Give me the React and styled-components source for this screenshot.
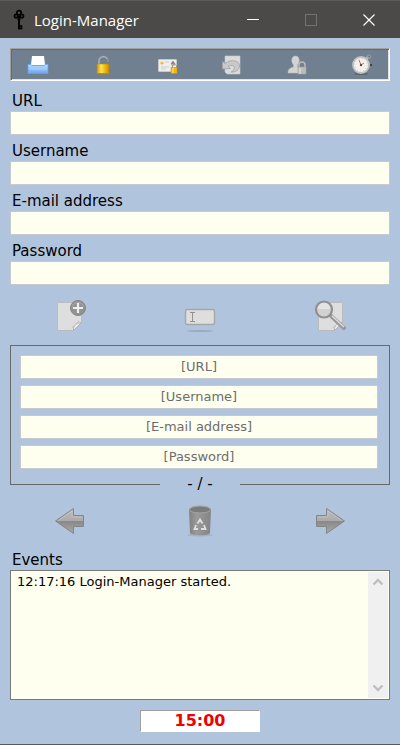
import React, { useId } from "react";
import styled, { createGlobalStyle, css } from "styled-components";

const GlobalStyle = createGlobalStyle`
  * { box-sizing: border-box; }
  html, body, #root { height: 100%; }
  body {
    margin: 0;
    background: #b0c4de;
    color: #000;
    font-family: Verdana, "DejaVu Sans", sans-serif;
  }
  button, input, textarea { font-family: inherit; border-radius: 0; }
`;

const Window = styled.div`
  min-height: 100vh;
  display: flex;
  flex-direction: column;
  background: #b0c4de;
  border-bottom: 1px solid #5a5a5a;
`;

const TitleBar = styled.header`
  height: 38px;
  display: flex;
  align-items: center;
  padding: 0 2px 0 10px;
  background: #4c4a48;
  border-top: 1px solid #5b5a58;
  color: #fff;
`;

const Title = styled.h1`
  flex: 1;
  margin: 0 0 0 6px;
  font: 400 15px/20px "Segoe UI", "Open Sans", sans-serif;
`;

const plainButton = css`
  display: flex;
  align-items: center;
  justify-content: center;
  padding: 0;
  border: 0;
  background: transparent;
`;

const WindowButton = styled.button`
  ${plainButton}
  width: 58px;
  height: 36px;
  color: ${(p) => (p.disabled ? "#737270" : "#fff")};
`;

const Content = styled.main`
  flex: 1;
  display: flex;
  flex-direction: column;
  padding: 10px 10px 12px;
`;

const Toolbar = styled.div`
  height: 33px;
  display: flex;
  justify-content: space-between;
  align-items: center;
  padding: 0 16px;
  background: #708090;
  border: 1px solid #a0a0a0;
  border-right-color: #fff;
  border-bottom-color: #fff;
  box-shadow: inset 1px 1px #696969, inset -1px -1px #e3e3e3;
`;

const ToolButton = styled.button`
  ${plainButton}
  width: 22px;
  height: 24px;
`;

const Form = styled.form`
  display: flex;
  flex-direction: column;
  gap: 6px;
  margin-top: 10px;
`;

const Label = styled.label`
  display: block;
  padding-left: 2px;
  font-size: 15px;
  line-height: 20px;
`;

const TextBox = styled.input`
  display: block;
  width: 100%;
  height: 24px;
  padding: 0 5px 2px;
  border: 1px solid #c8c8d0;
  background: #fffff0;
  color: #000;
  font-size: 13px;
  outline: none;
  text-align: ${(p) => (p.$centered ? "center" : "left")};
  &::placeholder { color: #6d6d6d; opacity: 1; }
`;

const ActionRow = styled.div`
  height: ${(p) => (p.$short ? "30px" : "32px")};
  display: grid;
  grid-template-columns: 120px 1fr 120px;
  align-items: center;
  justify-items: center;
  margin-top: ${(p) => (p.$short ? "20px" : "15px")};
`;

const ActionButton = styled.button`
  ${plainButton}
  width: 32px;
  height: 32px;
`;

const Record = styled.section`
  position: relative;
  display: flex;
  flex-direction: column;
  gap: 6px;
  margin-top: 13px;
  padding: 9px 11px 15px 9px;
  border: 1px solid #696969;
`;

const Counter = styled.output`
  position: absolute;
  bottom: -10px;
  left: 50%;
  width: 80px;
  margin-left: -40px;
  background: #b0c4de;
  font-size: 15px;
  line-height: 20px;
  text-align: center;
`;

const EventSection = styled.section`
  flex: 1;
  display: flex;
  flex-direction: column;
  margin-top: 15px;
`;

const EventFrame = styled.div`
  flex: 1;
  display: flex;
  min-height: 130px;
  padding: 1px;
  border: 1px solid #7a7a7a;
  background: #fffff0;
`;

const EventLog = styled.textarea`
  flex: 1;
  min-width: 0;
  padding: 1px 5px;
  border: 0;
  background: transparent;
  color: #000;
  font-size: 13px;
  line-height: 18px;
  resize: none;
  outline: none;
`;

const ScrollTrack = styled.div`
  width: 20px;
  display: flex;
  flex-direction: column;
  justify-content: space-between;
  background: #f0f0f0;
`;

const ScrollButton = styled.button`
  ${plainButton}
  height: 20px;
  color: #bfbfbf;
`;

const Timer = styled.time`
  align-self: center;
  width: 120px;
  height: 22px;
  margin-top: 10px;
  border: 1px solid #fff;
  border-top-color: #a0a0a0;
  border-left-color: #a0a0a0;
  background: #fff;
  color: #f00000;
  font-size: 16px;
  font-weight: 700;
  line-height: 20px;
  text-align: center;
`;

const KeyIcon = () => (
  <svg width="18" height="22" viewBox="0 0 18 22" fill="none" stroke="#000">
    <g strokeWidth="1.7">
      <circle cx="9" cy="3.800" r="2.200" />
      <circle cx="6.200" cy="7" r="1.700" />
      <circle cx="11.800" cy="7" r="1.700" />
    </g>
    <path d="M9 7v13.500" strokeWidth="2" />
    <path d="M9 10h0M7.500 10.500h3M10 17h1.500v2.500H10" strokeWidth="1.600" />
  </svg>
);

const InboxIcon = () => (
  <svg width="22" height="20" viewBox="0 0 22 20">
    <defs>
      <linearGradient id="tray" x2="0" y2="1">
        <stop stopColor="#b9dcff" /><stop offset="1" stopColor="#6ba5ed" />
      </linearGradient>
    </defs>
    <path d="M3 6h16l1 5H2z" fill="#5289cf" />
    <path d="M5 1h12l1 9H4z" fill="#fff" />
    <path d="M1 9.500h3l1 1h12l1-1h3v9H1z" fill="url(#tray)" stroke="#6da5ea" strokeWidth=".7" />
    <path d="M2 14h18" stroke="#a9d1ff" />
  </svg>
);

const UnlockIcon = () => (
  <svg width="16" height="22" viewBox="0 0 16 22">
    <defs>
      <linearGradient id="gold">
        <stop stopColor="#d69a06" /><stop offset=".35" stopColor="#ffe450" />
        <stop offset=".65" stopColor="#edbb12" /><stop offset="1" stopColor="#c98e00" />
      </linearGradient>
    </defs>
    <path d="M4 11V7c0-6 9-6 9-.5V8" fill="none" stroke="#858f95" strokeWidth="2" />
    <path d="M4 11V7c0-5 7-5.5 8-2" fill="none" stroke="#c5cbd0" strokeWidth=".8" />
    <rect x="2" y="10" width="12" height="10" rx=".8" fill="url(#gold)" stroke="#b88800" strokeWidth=".5" />
    <path d="M2 19.5h12" stroke="#c58b00" />
  </svg>
);

const CardIcon = () => (
  <svg width="22" height="20" viewBox="0 0 22 20">
    <rect x="1.5" y="4.5" width="18" height="12" rx=".6" fill="#eee" stroke="#c5c9cb" />
    <circle cx="5" cy="8" r="1.6" fill="#e8bd2d" />
    <path d="M8 7h4M4 12h8M4 14h5" stroke="#c9ccd0" />
    <path d="M14 9l2-3 2 3zM14 10h4" fill="#b98078" stroke="#777" strokeWidth=".6" />
    <path d="M15.5 13v-2c0-2 4-2 4 0v2" fill="none" stroke="#9b9b8e" />
    <rect x="14" y="12.5" width="6" height="6" fill="#edb719" stroke="#c5910c" strokeWidth=".5" />
    <path d="M16 13v5" stroke="#ffe575" />
  </svg>
);

const UndoIcon = () => (
  <svg width="22" height="20" viewBox="0 0 22 20">
    <path d="M4 1h15v18H6l-2-2z" fill="#dcdcdc" stroke="#cacaca" strokeWidth=".6" />
    <path d="M1.500 6.500v7.500l8-.500-2.500-2.200c4-2 7.500-.5 6 3-.5 1.200-1.500 2-3 2.700 5 .5 8.500-2.500 8.500-6 0-5.500-8-7.500-14.500-2.500z" fill="#c9c9c9" stroke="#a2a2a2" strokeWidth=".8" />
  </svg>
);

const UserLockIcon = () => (
  <svg width="20" height="22" viewBox="0 0 20 22">
    <path d="M1 19c0-4 2-5 5.5-6v-2C3.5 7 4.5 2 8.5 2s5 5 2 9v2c3 1 5 2 5 6z" fill="#d3d3d3" stroke="#bbb" strokeWidth=".5" />
    <path d="M12 14v-3c0-4 6-4 6 0v3" fill="none" stroke="#b9b9b9" strokeWidth="1.5" />
    <rect x="11" y="13" width="8" height="7" fill="#bcbcbc" stroke="#a4a4a4" strokeWidth=".6" />
    <path d="M13 14v5.500" stroke="#dcdcdc" strokeWidth="1.5" />
  </svg>
);

const StopwatchIcon = () => (
  <svg width="22" height="22" viewBox="0 0 22 22">
    <ellipse cx="10" cy="20" rx="7" ry="1" fill="#566574" />
    <path d="M15 5l2-2" stroke="#c7cccf" strokeWidth="2" />
    <circle cx="18" cy="2.700" r="1.800" fill="none" stroke="#93a2ab" />
    <circle cx="10" cy="11" r="8" fill="#f4f2f0" stroke="#c4c1be" strokeWidth="1.8" />
    <circle cx="10" cy="11" r="6" fill="none" stroke="#c2bfba" strokeDasharray=".7 2.440" />
    <path d="M10 11L8 6M10 11l3-2" stroke="#b5706d" />
    <circle cx="10" cy="11" r="1.200" fill="#75403e" />
    <path d="M20 10v2" stroke="#222" strokeWidth="1.300" />
  </svg>
);

const Sheet = () => (
  <>
    <path d="M3.500 2.500h24v20l-8 8h-16z" fill="#dedede" stroke="#b9bbbe" />
    <path d="M19.500 30.500c0-5 1-7 8-8z" fill="#ededed" stroke="#b2b2b2" />
    <path d="M18 28l7-7" stroke="#c8c8c8" strokeWidth="1.500" />
  </>
);

const AddIcon = () => (
  <svg width="32" height="32" viewBox="0 0 32 32">
    <Sheet />
    <circle cx="24" cy="8" r="7.500" fill="#929292" stroke="#858585" />
    <path d="M18 7c2-6 10-6 12 0" fill="none" stroke="#aaa" />
    <path d="M19 8h10M24 3v10" stroke="#eee" strokeWidth="2.200" />
  </svg>
);

const RenameIcon = () => (
  <svg width="32" height="32" viewBox="0 0 32 32">
    <rect x="1.500" y="9.500" width="29" height="15" rx="2" fill="#dedede" stroke="#a6a6a6" strokeWidth="1.400" />
    <path d="M6 12.500h5M6 21.500h5M8.500 12v10" stroke="#929292" />
    <ellipse cx="16" cy="31" rx="13" ry="1" fill="#98abc2" />
  </svg>
);

const SearchIcon = () => (
  <svg width="32" height="32" viewBox="0 0 32 32">
    <g transform="translate(1 0)"><Sheet /></g>
    <path d="M17 16l13 12" stroke="#989898" strokeWidth="4" strokeLinecap="round" />
    <path d="M18 16l12 11" stroke="#ddd" strokeWidth="1.500" />
    <circle cx="10" cy="9.500" r="8" fill="#d2d2d2" stroke="#909090" strokeWidth="2.200" />
    <path d="M4 9c0-8 12-8 12 0z" fill="#e4e4e4" />
  </svg>
);

const ArrowShape = () => (
  <>
    <defs>
      <linearGradient id="steel" x2="0" y2="1">
        <stop stopColor="#bebebe" /><stop offset=".5" stopColor="#aaa" />
        <stop offset=".52" stopColor="#898989" /><stop offset="1" stopColor="#aaa" />
      </linearGradient>
    </defs>
    <path d="M1.500 16L19.500 3.500v7h10v11h-10v7z" fill="url(#steel)" stroke="#858585" strokeLinejoin="round" />
    <path d="M4 16L18 6v6h10" fill="none" stroke="#c6c6c6" strokeWidth=".7" />
  </>
);

const ArrowIcon = ({ right }) => (
  <svg width="32" height="32" viewBox="0 0 32 32">
    {right ? <g transform="matrix(-1 0 0 1 32 0)"><ArrowShape /></g> : <ArrowShape />}
  </svg>
);

const TrashIcon = () => (
  <svg width="32" height="32" viewBox="0 0 32 32">
    <defs>
      <linearGradient id="bin">
        <stop stopColor="#808080" /><stop offset=".35" stopColor="#9a9a9a" /><stop offset="1" stopColor="#848484" />
      </linearGradient>
    </defs>
    <ellipse cx="16" cy="30" rx="13" ry="1.500" fill="#a1b4cc" />
    <path d="M5 4l1 24c1 3 19 3 20 0l1-24z" fill="url(#bin)" />
    <ellipse cx="16" cy="4.500" rx="10.500" ry="3.500" fill="#7b7b7b" stroke="#a6a6a6" />
    <path d="M13.500 18.500l2.500-4 2.500 4M20 20l1.500 4H17M14 24h-3.500L12 20" fill="none" stroke="#dedede" strokeWidth="1.800" />
  </svg>
);

const Chevron = ({ down }) => (
  <svg width="12" height="8" viewBox="0 0 12 8" fill="none" stroke="currentColor" strokeWidth="2.400">
    <path d={down ? "M1.500 1.500L6 6l4.500-4.500" : "M1.500 6.500L6 2l4.500 4.500"} />
  </svg>
);

const MinimizeIcon = () => (
  <svg width="12" height="12"><path d="M0 5.500h12" stroke="currentColor" /></svg>
);
const MaximizeIcon = () => (
  <svg width="12" height="12"><rect x=".5" y=".5" width="11" height="11" fill="none" stroke="currentColor" /></svg>
);
const CloseIcon = () => (
  <svg width="12" height="12"><path d="M.5 .5l11 11M11.500 .5l-11 11" stroke="currentColor" strokeWidth="1.200" /></svg>
);

const tools = [
  ["Open", InboxIcon],
  ["Unlock", UnlockIcon],
  ["Change certificate", CardIcon],
  ["Undo", UndoIcon],
  ["Lock user", UserLockIcon],
  ["Timer", StopwatchIcon],
];

const fields = ["URL", "Username", "E-mail address", "Password"];

function Field({ label }) {
  const id = useId();
  return (
    <div>
      <Label htmlFor={id}>{label}</Label>
      <TextBox id={id} type={label === "Password" ? "password" : "text"} />
    </div>
  );
}

export default function App() {
  return (
    <>
      <GlobalStyle />
      <Window>
        <TitleBar>
          <KeyIcon />
          <Title>Login-Manager</Title>
          <WindowButton aria-label="Minimize"><MinimizeIcon /></WindowButton>
          <WindowButton aria-label="Maximize" disabled><MaximizeIcon /></WindowButton>
          <WindowButton aria-label="Close"><CloseIcon /></WindowButton>
        </TitleBar>
        <Content>
          <Toolbar role="toolbar">
            {tools.map(([name, Icon]) => (
              <ToolButton key={name} aria-label={name}><Icon /></ToolButton>
            ))}
          </Toolbar>
          <Form>
            {fields.map((label) => <Field key={label} label={label} />)}
          </Form>
          <ActionRow>
            <ActionButton aria-label="Add"><AddIcon /></ActionButton>
            <ActionButton aria-label="Rename"><RenameIcon /></ActionButton>
            <ActionButton aria-label="Search"><SearchIcon /></ActionButton>
          </ActionRow>
          <Record>
            {fields.map((label) => (
              <TextBox key={label} $centered readOnly aria-label={label} placeholder={`[${label}]`} />
            ))}
            <Counter>- / -</Counter>
          </Record>
          <ActionRow $short>
            <ActionButton aria-label="Previous"><ArrowIcon /></ActionButton>
            <ActionButton aria-label="Delete"><TrashIcon /></ActionButton>
            <ActionButton aria-label="Next"><ArrowIcon right /></ActionButton>
          </ActionRow>
          <EventSection>
            <Label htmlFor="events">Events</Label>
            <EventFrame>
              <EventLog id="events" readOnly defaultValue="12:17:16 Login-Manager started." />
              <ScrollTrack>
                <ScrollButton aria-label="Scroll up"><Chevron /></ScrollButton>
                <ScrollButton aria-label="Scroll down"><Chevron down /></ScrollButton>
              </ScrollTrack>
            </EventFrame>
          </EventSection>
          <Timer>15:00</Timer>
        </Content>
      </Window>
    </>
  );
}
